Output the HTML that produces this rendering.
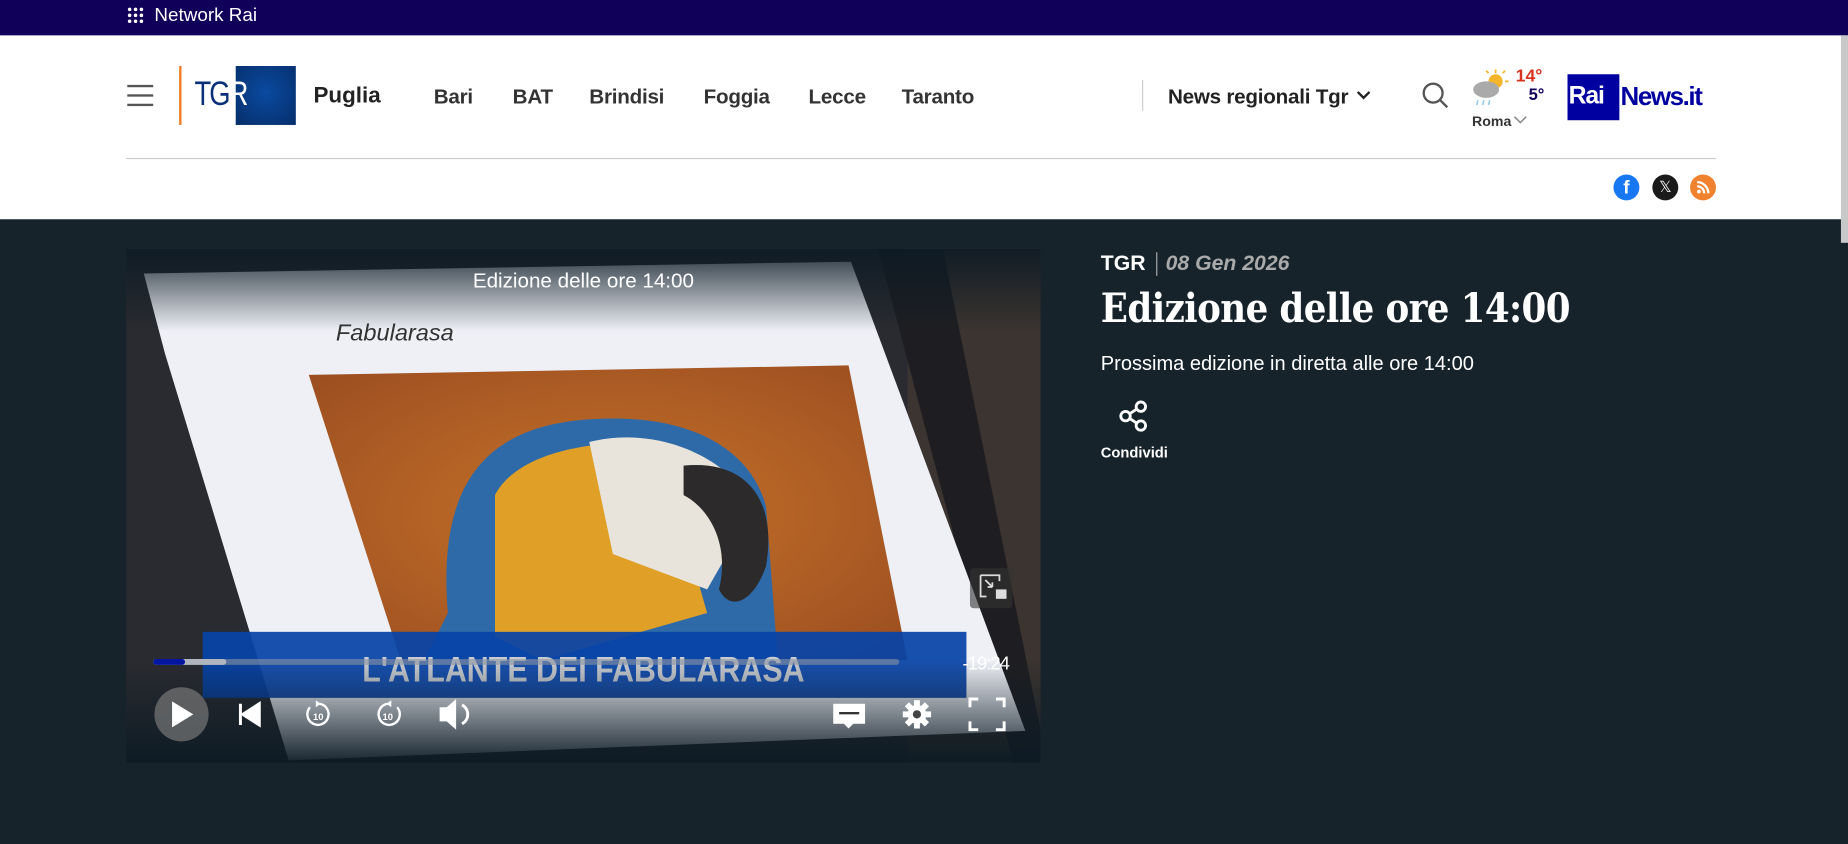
<!DOCTYPE html>
<html><head><meta charset="utf-8"><style>
html,body{margin:0;padding:0;width:1848px;height:844px;overflow:hidden;background:#17232a;}
#w{position:absolute;left:0;top:0;width:1568px;height:716px;transform:scale(1.17857,1.1788);transform-origin:0 0;font-family:"Liberation Sans",sans-serif;overflow:hidden;background:#17232a}
.a{position:absolute;white-space:nowrap}
.top{left:0;top:0;width:1568px;height:30px;background:#11005a}
.hdr{left:0;top:30px;width:1568px;height:156px;background:#fff}
.nav{top:72px;font-size:17.5px;color:#333;font-weight:600;letter-spacing:-0.2px}
</style></head><body><div id="w">
<div class="a top"></div>
<svg class="a" style="left:107px;top:5px" width="16" height="16" viewBox="0 0 16 16" fill="#fff"><circle cx="3" cy="3" r="1.5"/><circle cx="8" cy="3" r="1.5"/><circle cx="13" cy="3" r="1.5"/><circle cx="3" cy="8" r="1.5"/><circle cx="8" cy="8" r="1.5"/><circle cx="13" cy="8" r="1.5"/><circle cx="3" cy="13" r="1.5"/><circle cx="8" cy="13" r="1.5"/><circle cx="13" cy="13" r="1.5"/></svg>
<div class="a" style="left:131px;top:5px;color:#fff;font-size:16px">Network Rai</div>
<div class="a hdr"></div>
<div class="a" style="left:108px;top:72px;width:22px;height:2px;background:#555;box-shadow:0 8px 0 #555,0 16px 0 #555"></div>
<div class="a" style="left:152px;top:56px;width:2px;height:50px;background:#f07b22"></div>
<div class="a" style="left:200px;top:56px;width:51px;height:50px;background:radial-gradient(circle at 50% 45%,#0a4aa0,#052e6a)"></div>
<div class="a" style="left:165px;top:64px;font-size:29px;color:#0b2f78;letter-spacing:-2px;transform:scaleX(0.8);transform-origin:0 0">TG<span style="color:#fff">R</span></div>
<div class="a" style="left:266px;top:71px;font-size:19px;font-weight:700;color:#222">Puglia</div>
<div class="a nav" style="left:368px">Bari</div>
<div class="a nav" style="left:435px">BAT</div>
<div class="a nav" style="left:500px">Brindisi</div>
<div class="a nav" style="left:597px">Foggia</div>
<div class="a nav" style="left:686px">Lecce</div>
<div class="a nav" style="left:765px">Taranto</div>
<div class="a" style="left:969px;top:68px;width:1px;height:26px;background:#ccc"></div>
<div class="a nav" style="left:991px;color:#222">News regionali Tgr</div>
<svg class="a" style="left:1150px;top:76px" width="14" height="10" viewBox="0 0 14 10"><path d="M2 2l5 5 5-5" stroke="#222" stroke-width="2" fill="none"/></svg>
<svg class="a" style="left:1206px;top:69px" width="24" height="24" viewBox="0 0 24 24"><circle cx="10" cy="10" r="8" stroke="#555" stroke-width="2" fill="none"/><path d="M16 16l6 6" stroke="#555" stroke-width="2"/></svg>
<svg class="a" style="left:1247px;top:57px" width="34" height="36" viewBox="0 0 34 36"><circle cx="22" cy="12" r="6" fill="#f5b52a"/><g stroke="#f5b52a" stroke-width="1.5"><path d="M22 2v3M30 12h3M28 5l2-2M16 5l-2-2"/></g><ellipse cx="14" cy="19" rx="11" ry="7" fill="#aaa"/><g stroke="#8ecbe8" stroke-width="1.3"><path d="M7 28l-1 4M12 28l-1 4M17 28l-1 4"/></g></svg>
<div class="a" style="left:1286px;top:56px;color:#d9331f;font-weight:700;font-size:15px">14°</div>
<div class="a" style="left:1297px;top:72px;color:#11005a;font-weight:700;font-size:14px">5°</div>
<div class="a" style="left:1249px;top:96px;color:#333;font-size:12px;font-weight:600">Roma</div>
<svg class="a" style="left:1284px;top:98px" width="12" height="8" viewBox="0 0 12 8"><path d="M1 1l5 5 5-5" stroke="#888" stroke-width="1.3" fill="none"/></svg>
<div class="a" style="left:1330px;top:63px;width:44px;height:39px;background:#0000a0"></div>
<div class="a" style="left:1331px;top:70px;color:#fff;font-weight:700;font-size:21px;letter-spacing:-1px">Rai</div>
<div class="a" style="left:1375px;top:69px;color:#0000a0;font-weight:700;font-size:22px;letter-spacing:-1.2px">News.it</div>
<div class="a" style="left:107px;top:134px;width:1349px;height:1px;background:#ccc"></div>
<div class="a" style="left:1369px;top:148px;width:22px;height:22px;border-radius:50%;background:#1877f2;color:#fff;font-weight:700;font-size:16px;text-align:center;line-height:24px">f</div>
<div class="a" style="left:1402px;top:148px;width:22px;height:22px;border-radius:50%;background:#1a1a1a;color:#fff;font-size:13px;text-align:center;line-height:22px">𝕏</div>
<div class="a" style="left:1434px;top:148px;width:22px;height:22px;border-radius:50%;background:#f0812e"></div>
<svg class="a" style="left:1434px;top:148px" width="22" height="22" viewBox="0 0 22 22"><circle cx="7.5" cy="14.5" r="1.6" fill="#fff"/><path d="M6 10a6 6 0 0 1 6 6M6 6.5a9.5 9.5 0 0 1 9.5 9.5" stroke="#fff" stroke-width="2" fill="none"/></svg>
<div class="a" style="left:1562px;top:30px;width:6px;height:176px;background:#c8c8c8"></div>

<svg class="a" style="left:107px;top:211px" width="776" height="436" viewBox="107 211 776 436">
<defs>
<linearGradient id="tg" x1="0" y1="0" x2="0" y2="1"><stop offset="0" stop-color="#0c1a24" stop-opacity=".9"/><stop offset="1" stop-color="#0c1a24" stop-opacity="0"/></linearGradient>
<linearGradient id="bg" x1="0" y1="0" x2="0" y2="1"><stop offset="0" stop-color="#0c1a24" stop-opacity="0"/><stop offset="1" stop-color="#0c1a24" stop-opacity=".95"/></linearGradient>
<radialGradient id="or" cx=".5" cy=".5" r=".7"><stop offset="0" stop-color="#c8732a"/><stop offset="1" stop-color="#9a4d20"/></radialGradient>
</defs>
<rect x="107" y="211" width="776" height="436" fill="#2a2b30"/>
<rect x="770" y="211" width="113" height="436" fill="#3b3430"/>
<polygon points="745,211 800,211 883,620 883,647 860,647" fill="#1e1e22"/>
<polygon points="122,232 722,222 870,620 245,645 140,300" fill="#eef0f6"/>
<polygon points="262,318 720,310 770,560 340,560" fill="url(#or)"/>
<path d="M380 520 C 370 400 420 355 520 355 C 600 355 640 390 650 430 L 660 560 L 360 560 Z" fill="#2f6aa8"/>
<path d="M420 420 C 440 380 520 370 560 380 L 600 520 L 460 560 L 420 540 Z" fill="#e0a028"/>
<path d="M500 375 C 560 360 620 390 640 430 L 600 500 L 520 470 Z" fill="#e8e4dc"/>
<path d="M580 395 C 630 390 660 420 650 480 C 640 510 620 520 610 500 C 620 460 600 430 580 420 Z" fill="#2c2a2a"/>
<text x="285" y="289" font-family="Liberation Sans" font-size="20" fill="#333" font-style="italic">Fabularasa</text>
<rect x="107" y="211" width="776" height="70" fill="url(#tg)"/>
<rect x="172" y="536" width="648" height="56" fill="#0844a8" opacity=".93"/>
<text x="495" y="578" text-anchor="middle" font-family="Liberation Sans" font-size="30" font-weight="700" fill="#c8ccd2" transform="translate(495 0) scale(0.86 1) translate(-495 0)" style="text-shadow:none">L'ATLANTE DEI FABULARASA</text>
<rect x="107" y="560" width="776" height="87" fill="url(#bg)"/>
<text x="495" y="244" text-anchor="middle" font-family="Liberation Sans" font-size="17.5" fill="#fff">Edizione delle ore 14:00</text>
<rect x="130" y="559" width="633" height="5" rx="2.5" fill="#8a93a0" opacity=".6"/>
<rect x="130" y="559" width="62" height="5" rx="2.5" fill="#b0b6be"/>
<rect x="130" y="559" width="27" height="5" rx="2.5" fill="#0015a0"/>
<text x="856" y="568" text-anchor="end" font-family="Liberation Sans" font-size="16" fill="#fff" letter-spacing="-1">-19:24</text>
<rect x="823" y="482" width="36" height="34" rx="3" fill="#333" opacity=".6"/>
<path d="M832 488h16v5M832 488v18h5M836 492l6 6M842 498h-4M842 498v-4" stroke="#ddd" stroke-width="1.5" fill="none"/><rect x="845" y="500" width="9" height="8" fill="#ddd"/>
<circle cx="154" cy="606" r="23" fill="#777" opacity=".7"/>
<path d="M146 595v22l18-11z" fill="#fff"/>
<path d="M204 597v18M220 597v18l-14-9z" stroke="#fff" stroke-width="2.5" fill="#fff"/>
<g fill="none" stroke="#fff" stroke-width="2"><path d="M263 600a9 9 0 1 0 8-3"/><path d="M337 600a9 9 0 1 1 -8-3"/></g>
<path d="M268 594l4 3-4 3z M332 594l-4 3 4 3z" fill="#fff"/>
<text x="270" y="611" text-anchor="middle" font-size="8" font-weight="700" fill="#fff" font-family="Liberation Sans">10</text>
<text x="329" y="611" text-anchor="middle" font-size="8" font-weight="700" fill="#fff" font-family="Liberation Sans">10</text>
<path d="M373 600h6l8-7v26l-8-7h-6z" fill="#fff"/><path d="M392 598a9 9 0 0 1 0 16" stroke="#fff" stroke-width="2.5" fill="none"/>
<path d="M707 597h27v17h-10l-4 4-4-4h-9z" fill="#fff"/><rect x="712" y="604" width="17" height="2" fill="#333"/>
<g transform="translate(778 606)"><circle r="8" fill="#fff"/><g fill="#fff"><rect x="-2.5" y="-12" width="5" height="24"/><rect x="-2.5" y="-12" width="5" height="24" transform="rotate(45)"/><rect x="-2.5" y="-12" width="5" height="24" transform="rotate(90)"/><rect x="-2.5" y="-12" width="5" height="24" transform="rotate(135)"/></g><circle r="3.5" fill="#444"/></g>
<path d="M823 600v-7h7M845 593h7v7M852 612v7h-7M830 619h-7v-7" stroke="#fff" stroke-width="2.5" fill="none"/>
</svg>

<div class="a" style="left:934px;top:213px;color:#fff;font-weight:700;font-size:18px">TGR</div>
<div class="a" style="left:981px;top:214px;width:1px;height:20px;background:#aaa"></div>
<div class="a" style="left:989px;top:213px;color:#aaa;font-style:italic;font-weight:700;font-size:18px">08 Gen 2026</div>
<div class="a" style="left:934px;top:242px;color:#fff;font-family:'DejaVu Serif',serif;font-weight:700;font-size:34px;letter-spacing:-0.6px;transform:scaleX(0.89);transform-origin:0 0">Edizione delle ore 14:00</div>
<div class="a" style="left:934px;top:299px;color:#fff;font-size:17px">Prossima edizione in diretta alle ore 14:00</div>
<svg class="a" style="left:949px;top:339px" width="26" height="28" viewBox="0 0 26 28"><g fill="none" stroke="#fff" stroke-width="2.4"><circle cx="19" cy="6" r="4"/><circle cx="6" cy="14" r="4"/><circle cx="19" cy="22" r="4"/><path d="M9.5 12l6-4M9.5 16l6 4"/></g></svg>
<div class="a" style="left:934px;top:377px;color:#fff;font-weight:700;font-size:12.5px">Condividi</div>
</div></body></html>
